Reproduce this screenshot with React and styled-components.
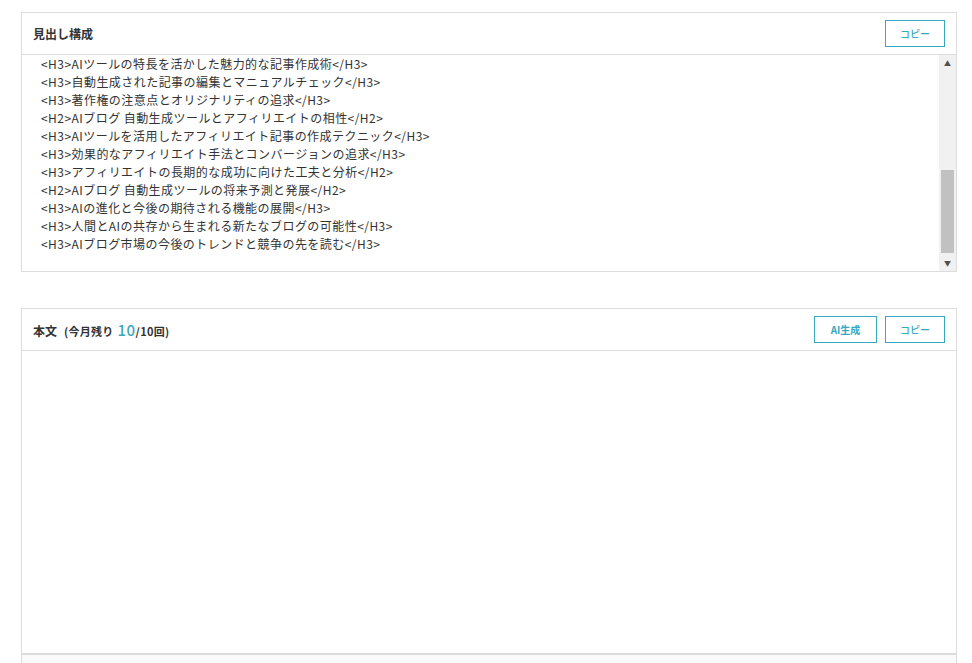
import styled, { createGlobalStyle } from "styled-components";

const GlobalStyle = createGlobalStyle`
  html, body {
    margin: 0;
    padding: 0;
    background: #fff;
  }
  body {
    font-family: "Noto Sans CJK JP", "Noto Sans", sans-serif;
    color: #333;
  }
`;

const headings = [
  "<H3>AIツールの特長を活かした魅力的な記事作成術</H3>",
  "<H3>自動生成された記事の編集とマニュアルチェック</H3>",
  "<H3>著作権の注意点とオリジナリティの追求</H3>",
  "<H2>AIブログ 自動生成ツールとアフィリエイトの相性</H2>",
  "<H3>AIツールを活用したアフィリエイト記事の作成テクニック</H3>",
  "<H3>効果的なアフィリエイト手法とコンバージョンの追求</H3>",
  "<H3>アフィリエイトの長期的な成功に向けた工夫と分析</H2>",
  "<H2>AIブログ 自動生成ツールの将来予測と発展</H2>",
  "<H3>AIの進化と今後の期待される機能の展開</H3>",
  "<H3>人間とAIの共存から生まれる新たなブログの可能性</H3>",
  "<H3>AIブログ市場の今後のトレンドと競争の先を読む</H3>",
];

export default function App() {
  return (
    <>
      <GlobalStyle />
      <Page>
        <Panel>
          <Header>
            <Title>見出し構成</Title>
            <Actions>
              <Button>コピー</Button>
            </Actions>
          </Header>
          <Body>
            <Lines>
              {headings.map((line, i) => (
                <Line key={i}>{line}</Line>
              ))}
            </Lines>
            <Scrollbar>
              <Arrow>▲</Arrow>
              <Track>
                <Thumb />
              </Track>
              <Arrow>▼</Arrow>
            </Scrollbar>
          </Body>
        </Panel>

        <Panel>
          <Header>
            <Title>
              本文
              <Remain>
                (今月残り <Count>10</Count>/10回)
              </Remain>
            </Title>
            <Actions>
              <Button $wide>AI生成</Button>
              <Button>コピー</Button>
            </Actions>
          </Header>
          <Editor />
          <Footer />
        </Panel>
      </Page>
    </>
  );
}

const Page = styled.div`
  display: flex;
  flex-direction: column;
  gap: 36px;
  padding: 12px 15px 0 21px;
  height: 663px;
  box-sizing: border-box;
  overflow: hidden;
`;

const Panel = styled.section`
  border: 1px solid #dcdcdc;
  background: #fff;
  flex-shrink: 0;
`;

const Header = styled.div`
  display: flex;
  align-items: center;
  justify-content: space-between;
  height: 41px;
  padding: 0 11px 0 11px;
  border-bottom: 1px solid #dcdcdc;
`;

const Title = styled.h2`
  margin: 0;
  font-size: 12px;
  font-weight: bold;
  color: #333;
  display: flex;
  align-items: baseline;
`;

const Remain = styled.span`
  font-size: 11px;
  font-weight: bold;
  margin-left: 7px;
  letter-spacing: 0.3px;
`;

const Count = styled.span`
  font-size: 15px;
  font-weight: 500;
  color: #36a9c0;
  letter-spacing: 0.5px;
  margin-left: 1px;
`;

const Actions = styled.div`
  display: flex;
  gap: 8px;
`;

const Button = styled.button`
  width: ${(p) => (p.$wide ? "63px" : "60px")};
  height: 27px;
  padding: 0;
  background: #fff;
  border: 1px solid #36a9c0;
  color: #36a9c0;
  font-family: "Noto Sans CJK JP", sans-serif;
  font-size: 10px;
  font-weight: ${(p) => (p.$wide ? "bold" : "500")};
  cursor: pointer;
`;

const Body = styled.div`
  display: flex;
  height: 216px;
`;

const Lines = styled.div`
  flex: 1;
  padding: 0 0 0 19px;
  font-size: 12px;
  line-height: 18px;
  letter-spacing: 0.45px;
  color: #333;
`;

const Line = styled.div`
  white-space: nowrap;
`;

const Scrollbar = styled.div`
  width: 17px;
  background: #f1f1f1;
  display: flex;
  flex-direction: column;
`;

const Arrow = styled.div`
  height: 16px;
  font-size: 7px;
  line-height: 16px;
  text-align: center;
  color: #505050;
`;

const Track = styled.div`
  flex: 1;
  display: flex;
  flex-direction: column;
  justify-content: flex-end;
  padding: 0 2px;
`;

const Thumb = styled.div`
  height: 83px;
  margin-bottom: 2px;
  background: #c1c1c1;
`;

const Editor = styled.div`
  height: 302px;
  border-bottom: 2px solid #dcdcdc;
`;

const Footer = styled.div`
  height: 30px;
  background: #fafafa;
`;
